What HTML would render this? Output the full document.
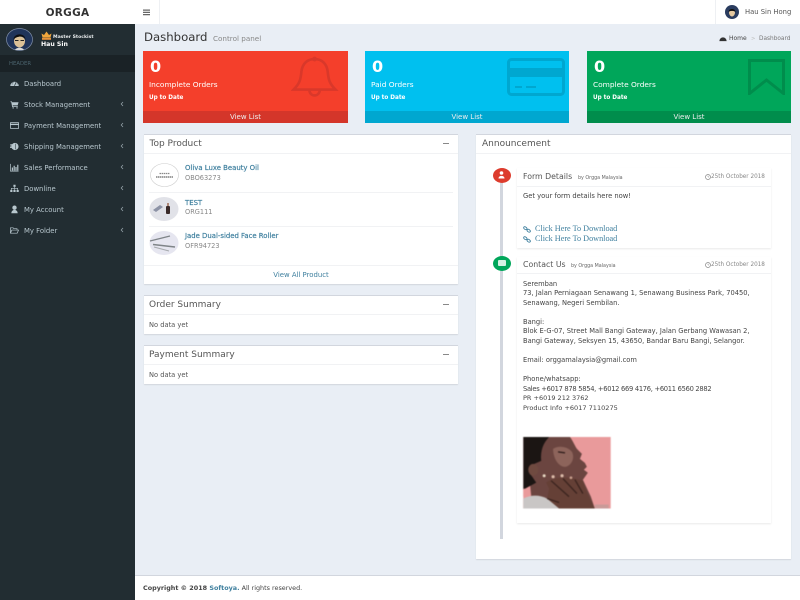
<!DOCTYPE html>
<html><head><meta charset="utf-8"><title>Dashboard</title>
<style>
*{box-sizing:border-box}
html,body{margin:0;padding:0;width:800px;height:600px;overflow:hidden;background:#e9eef5;font-family:"DejaVu Sans","Liberation Sans",sans-serif;color:#444}
#w{position:absolute;left:0;top:0;width:800px;height:600px;filter:blur(.35px);overflow:hidden}
.a{position:absolute}
.t{position:absolute;white-space:nowrap;line-height:10px;height:10px}
.box{position:absolute;background:#fff;border-top:1px solid #d2d6de;box-shadow:0 1px 1px rgba(0,0,0,.1)}
.hl{position:absolute;height:1px;background:#f1f2f4}
.m{position:absolute;left:24px;font-size:6.85px;color:#b8c7ce;white-space:nowrap;line-height:10px}
.i{position:absolute;left:10px;width:9px;height:9px}
.c{position:absolute;left:120px;width:4px;height:6px;opacity:.75}
.card{position:absolute;top:51px;height:72px;color:#fff}
.card .f{position:absolute;left:0;right:0;bottom:0;height:12px;text-align:center;font-size:7px;line-height:12px;color:#eee}
.card .n{position:absolute;left:7px;top:4px;font:bold 16px/24px "DejaVu Sans",sans-serif}
.card .l{position:absolute;left:6px;top:29px;font-size:7.4px;line-height:10px;white-space:nowrap}
.card .u{position:absolute;left:6px;top:41.500px;font-size:5.700px;line-height:10px;font-weight:bold;white-space:nowrap}
.h{font-size:9px;color:#555}
.body{font-size:6.7px;color:#444}
.pn{font-size:6.9px;color:#3e7f9e;-webkit-text-stroke:.18px #3e7f9e}
.min{position:absolute;width:6px;height:1px;background:#888}
</style></head><body><div id="w">

<!-- top bar -->
<div class="a" style="left:0;top:0;width:800px;height:24px;background:#fff"></div>
<div class="t" style="left:0;top:7.500px;width:135px;text-align:center;font:bold 10.500px/10px 'DejaVu Sans',sans-serif;color:#333;letter-spacing:.3px">ORGGA</div>
<svg class="a" style="left:143px;top:9px" width="8" height="7"><path d="M0 .5h7v1.200H0zM0 2.800h7V4H0zM0 5h7v1.200H0z" fill="#666"/></svg>
<div class="a" style="left:159px;top:0;width:1px;height:24px;background:#eef0f3"></div>
<div class="a" style="left:715px;top:0;width:1px;height:24px;background:#eef0f3"></div>
<svg class="a" style="left:725px;top:5px" width="14" height="14" viewBox="0 0 14 14"><circle cx="7" cy="7" r="7" fill="#2a3c5f"/><path d="M4 7.500c0-2.500 6-2.500 6 0 0 2-1.400 4-3 4s-3-2-3-4z" fill="#e5c9a0"/><path d="M3.500 7c0-4 7-4 7 0-1-1.500-6-1.500-7 0z" fill="#111"/></svg>
<div class="t" style="left:745px;top:7px;font-size:6.8px;color:#555">Hau Sin Hong</div>

<!-- sidebar -->
<div class="a" style="left:0;top:24px;width:135px;height:576px;background:#222d32"></div>
<div class="a" style="left:0;top:55px;width:135px;height:17px;background:#1a2226"></div>
<svg class="a" style="left:6px;top:28px" width="27" height="23" viewBox="0 0 27 23"><ellipse cx="13.500" cy="11.500" rx="13" ry="11" fill="#20345a" stroke="#7f8ea8" stroke-width=".7"/><path d="M8 13c0-6 11-6 11 0 0 4-3 6.500-5.500 6.500S8 17 8 13z" fill="#dcc197"/><path d="M7.500 12c-.5-7 12-8 12 0-1-3-3-3.500-5-3.500S8.500 9.500 7.500 12z" fill="#0e0e10"/><path d="M9 12.500h3.500M14.500 12.500H18" stroke="#222" stroke-width="1"/><path d="M9 22c1-3 8-3 9 0z" fill="#d9d9d9"/></svg>
<svg class="a" style="left:41px;top:31px" width="11" height="9" viewBox="0 0 11 9"><path d="M.5 2.500l2.500 1.500L5.500.5 8 4l2.500-1.500-1 4h-8z" fill="#f0a63c"/><rect x="1" y="6.800" width="9" height="2" fill="#e8933a"/></svg>
<div class="t" style="left:53px;top:33px;font-size:4.600px;font-weight:bold;color:#e6e9ea">Master Stockist</div>
<div class="t" style="left:41px;top:39.500px;font-size:6.200px;font-weight:bold;color:#fff">Hau Sin</div>
<div class="t" style="left:9px;top:59px;font-size:5.300px;color:#4b646f">HEADER</div>

<svg class="i" style="top:79px" viewBox="0 0 10 10"><path d="M.3 7.800a4.700 4.700 0 1 1 9.400 0z" fill="#b8c7ce"/><path d="M5 7.500L6.800 3.500M2 5.500h1M7.500 5.500h1M3 3.500l.6.600" stroke="#222d32" stroke-width=".8"/></svg>
<div class="m" style="top:78.500px">Dashboard</div>

<svg class="i" style="top:100px" viewBox="0 0 10 10"><path d="M.5 1.500h1.500l.5 1h7l-1 3.500H3l.2 1h5.500v.8H2.400L1.400 2.300H.5z" fill="#b8c7ce"/><circle cx="3.500" cy="8.800" r=".8" fill="#b8c7ce"/><circle cx="7.800" cy="8.800" r=".8" fill="#b8c7ce"/></svg>
<div class="m" style="top:99.500px">Stock Management</div>

<svg class="i" style="top:121px" viewBox="0 0 10 10"><rect x=".4" y="1.500" width="9.200" height="7" rx="1" fill="none" stroke="#b8c7ce" stroke-width=".9"/><rect x=".4" y="3" width="9.200" height="1.500" fill="#b8c7ce"/></svg>
<div class="m" style="top:120.500px">Payment Management</div>

<svg class="i" style="top:142px" viewBox="0 0 10 10"><circle cx="5.500" cy="5" r="4" fill="#b8c7ce"/><rect x=".3" y="2.500" width="4" height="1.500" fill="#b8c7ce"/><rect x="0" y="5" width="3.500" height="1.500" fill="#b8c7ce"/><path d="M6 2v6" stroke="#222d32" stroke-width=".6"/></svg>
<div class="m" style="top:141.500px">Shipping Management</div>

<svg class="i" style="top:163px" viewBox="0 0 10 10"><path d="M.5 1v8h9" fill="none" stroke="#b8c7ce" stroke-width=".8"/><path d="M2 5h1.300v3.500H2zM4 3h1.300v5.500H4zM6 4.500h1.300v4H6zM8 2h1.300v6.500H8z" fill="#b8c7ce"/></svg>
<div class="m" style="top:162.500px">Sales Performance</div>

<svg class="i" style="top:184px" viewBox="0 0 10 10"><path d="M3.800 .8h2.400v2.400H3.800zM.3 6.500h2.400v2.400H.3zM3.800 6.500h2.400v2.400H3.800zM7.300 6.500h2.400v2.400H7.300z" fill="#b8c7ce"/><path d="M1.500 6.500V4.800h7v1.700M5 3.200v3.300" fill="none" stroke="#b8c7ce" stroke-width=".7"/></svg>
<div class="m" style="top:183.500px">Downline</div>

<svg class="i" style="top:205px" viewBox="0 0 10 10"><circle cx="5" cy="3" r="2.400" fill="#b8c7ce"/><path d="M1.500 9.200c0-5 7-5 7 0z" fill="#b8c7ce"/></svg>
<div class="m" style="top:204.500px">My Account</div>

<svg class="i" style="top:226px" viewBox="0 0 10 10"><path d="M.5 8V2h3l.8 1h3.500v1.500M.5 8l1.500-3.500h7.500L8 8z" fill="none" stroke="#b8c7ce" stroke-width=".8"/></svg>
<div class="m" style="top:225.500px">My Folder</div>

<svg class="c" style="top:101px" viewBox="0 0 4 6"><path d="M3 1L1.200 3 3 5" fill="none" stroke="#b8c7ce" stroke-width=".8"/></svg>
<svg class="c" style="top:122px" viewBox="0 0 4 6"><path d="M3 1L1.200 3 3 5" fill="none" stroke="#b8c7ce" stroke-width=".8"/></svg>
<svg class="c" style="top:143px" viewBox="0 0 4 6"><path d="M3 1L1.200 3 3 5" fill="none" stroke="#b8c7ce" stroke-width=".8"/></svg>
<svg class="c" style="top:164px" viewBox="0 0 4 6"><path d="M3 1L1.200 3 3 5" fill="none" stroke="#b8c7ce" stroke-width=".8"/></svg>
<svg class="c" style="top:185px" viewBox="0 0 4 6"><path d="M3 1L1.200 3 3 5" fill="none" stroke="#b8c7ce" stroke-width=".8"/></svg>
<svg class="c" style="top:206px" viewBox="0 0 4 6"><path d="M3 1L1.200 3 3 5" fill="none" stroke="#b8c7ce" stroke-width=".8"/></svg>
<svg class="c" style="top:227px" viewBox="0 0 4 6"><path d="M3 1L1.200 3 3 5" fill="none" stroke="#b8c7ce" stroke-width=".8"/></svg>

<!-- page header -->
<div class="t" style="left:144px;top:29px;height:16px;line-height:16px;font-size:11.700px;color:#333">Dashboard</div>
<div class="t" style="left:213px;top:33.500px;font-size:7.200px;color:#888">Control panel</div>
<svg class="a" style="left:719px;top:35px" width="8" height="7" viewBox="0 0 10 9"><path d="M.3 7.800a4.700 4.700 0 1 1 9.400 0z" fill="#333"/></svg>
<div class="t" style="left:729px;top:34px;font-size:6px;color:#444">Home</div>
<div class="t" style="left:751px;top:34px;font-size:5.300px;color:#bbb">&gt;</div>
<div class="t" style="left:759px;top:34px;font-size:5.800px;color:#777">Dashboard</div>

<!-- cards -->
<div class="card" style="left:143px;width:205px;background:#f43f2b">
  <svg class="a" style="left:148px;top:3px" width="48" height="45" viewBox="0 0 55 46"><path d="M27 3c-9 0-14 6-15 14-1 10-2 14-9 21h48c-7-7-8-11-9-21-1-8-6-14-15-14z" fill="none" stroke="#d9382a" stroke-width="3"/><circle cx="27" cy="3" r="2.800" fill="#d9382a"/><path d="M21 38c0 9 12 9 12 0" fill="none" stroke="#d9382a" stroke-width="3"/></svg>
  <div class="n">0</div><div class="l">Incomplete Orders</div><div class="u">Up to Date</div>
  <div class="f" style="background:#d4362a">View List</div>
</div>
<div class="card" style="left:365px;width:204px;background:#00c0ef">
  <svg class="a" style="left:142px;top:7px" width="58" height="38" viewBox="0 0 58 38"><rect x="1.500" y="1.500" width="55" height="35" rx="3" fill="none" stroke="#00a7d0" stroke-width="3"/><rect x="1.500" y="10" width="55" height="9" fill="#00a7d0"/><path d="M8 29h7M19 29h10" stroke="#00a7d0" stroke-width="2"/></svg>
  <div class="n">0</div><div class="l">Paid Orders</div><div class="u">Up to Date</div>
  <div class="f" style="background:#00a7d0">View List</div>
</div>
<div class="card" style="left:587px;width:204px;background:#00a65a">
  <svg class="a" style="left:161px;top:8px" width="37" height="36" viewBox="0 0 37 36"><path d="M1.500 1.500h34v33L18.500 21 1.500 34.500z" fill="none" stroke="#008d4c" stroke-width="3"/></svg>
  <div class="n">0</div><div class="l">Complete Orders</div><div class="u">Up to Date</div>
  <div class="f" style="background:#008d4c">View List</div>
</div>

<!-- top product -->
<div class="box" style="left:144px;top:134px;width:314px;height:150px"></div>
<div class="t h" style="left:149.500px;top:138.500px">Top Product</div>
<div class="min" style="left:443px;top:143px"></div>
<div class="hl" style="left:144px;top:153px;width:314px"></div>

<svg class="a" style="left:150px;top:163px" width="29" height="24" viewBox="0 0 29 24"><ellipse cx="14.500" cy="12" rx="14" ry="11.500" fill="#fff" stroke="#ccc" stroke-width=".6"/><path d="M9.500 10.500h10" stroke="#888" stroke-width="1.200" stroke-dasharray="1.500 .6"/><path d="M6 14h17" stroke="#666" stroke-width="1.200" stroke-dasharray="1.500 .5"/></svg>
<div class="t pn" style="left:185px;top:163px">Oliva Luxe Beauty Oil</div>
<div class="t" style="left:185px;top:173px;font-size:6.600px;color:#888">OBO63273</div>
<div class="hl" style="left:149px;top:192px;width:304px"></div>

<svg class="a" style="left:149px;top:197px" width="30" height="24" viewBox="0 0 30 24"><ellipse cx="15" cy="12" rx="14.500" ry="12" fill="#e1e2e8"/><path d="M4 13l7-5 3 2-7 5z" fill="#8d93a6"/><rect x="17" y="9" width="4" height="8" rx="1" fill="#3a2a28"/><rect x="18" y="6" width="2" height="3" fill="#b08a7a"/></svg>
<div class="t pn" style="left:185px;top:197.500px">TEST</div>
<div class="t" style="left:185px;top:207px;font-size:6.600px;color:#888">ORG111</div>
<div class="hl" style="left:149px;top:226px;width:304px"></div>

<svg class="a" style="left:149px;top:231px" width="30" height="24" viewBox="0 0 30 24"><ellipse cx="15" cy="12" rx="14.500" ry="12" fill="#e6e6f0"/><path d="M1 10l20-5" stroke="#7f8488" stroke-width="1.400"/><path d="M4 13.500l22 2.500" stroke="#7f8488" stroke-width="1.400"/><path d="M5 16l15 4" stroke="#a6a9ad" stroke-width="1"/></svg>
<div class="t pn" style="left:185px;top:231px">Jade Dual-sided Face Roller</div>
<div class="t" style="left:185px;top:241px;font-size:6.600px;color:#888">OFR94723</div>
<div class="hl" style="left:144px;top:265px;width:314px"></div>
<div class="t" style="left:144px;top:270px;width:314px;text-align:center;font-size:6.900px;color:#3e7f9e">View All Product</div>

<!-- order -->
<div class="box" style="left:144px;top:295px;width:314px;height:39px"></div>
<div class="t h" style="left:149px;top:299.500px">Order Summary</div>
<div class="min" style="left:443px;top:304px"></div>
<div class="hl" style="left:144px;top:314px;width:314px"></div>
<div class="t" style="left:149px;top:320px;font-size:6.700px;color:#555">No data yet</div>

<!-- payment -->
<div class="box" style="left:144px;top:345px;width:314px;height:39px"></div>
<div class="t h" style="left:149px;top:349.500px">Payment Summary</div>
<div class="min" style="left:443px;top:354px"></div>
<div class="hl" style="left:144px;top:364px;width:314px"></div>
<div class="t" style="left:149px;top:370px;font-size:6.700px;color:#555">No data yet</div>

<!-- announcement -->
<div class="box" style="left:476px;top:134px;width:315px;height:425px"></div>
<div class="t h" style="left:482px;top:138.500px">Announcement</div>
<div class="hl" style="left:476px;top:153px;width:315px"></div>
<div class="a" style="left:500px;top:170px;width:3px;height:369px;background:#d2d6de"></div>

<div class="a" style="left:492.500px;top:168px;width:18px;height:15px;border-radius:50%;background:#dd3c2d"></div>
<svg class="a" style="left:498px;top:171px" width="7" height="8" viewBox="0 0 7 8"><circle cx="3.500" cy="2" r="1.800" fill="#fff"/><path d="M.5 7.500c0-3.500 6-3.500 6 0z" fill="#fff"/></svg>
<div class="a" style="left:492.500px;top:256px;width:18px;height:15px;border-radius:50%;background:#00a65a"></div>
<div class="a" style="left:497.500px;top:260px;width:8px;height:6px;background:#d4f2e3;border-radius:1px"></div>

<div class="a" style="left:517px;top:168px;width:254px;height:80px;background:#fff;box-shadow:0 1px 2px rgba(0,0,0,.09)"></div>
<div class="hl" style="left:517px;top:186px;width:254px"></div>
<div class="t" style="left:523px;top:172px;font-size:7.800px;color:#555">Form Details</div>
<div class="t" style="left:578px;top:173.500px;font-size:4.800px;color:#666">by Orgga Malaysia</div>
<svg class="a" style="left:705px;top:174px" width="6" height="6" viewBox="0 0 6 6"><circle cx="3" cy="3" r="2.500" fill="none" stroke="#888" stroke-width=".7"/><path d="M3 1.500V3h1.200" fill="none" stroke="#888" stroke-width=".5"/></svg>
<div class="t" style="left:711px;top:172px;font-size:5.700px;color:#888">25th October 2018</div>
<div class="t body" style="left:523px;top:191px;font-size:6.750px">Get your form details here now!</div>
<svg class="a" style="left:523px;top:226px" width="8" height="7" viewBox="0 0 8 7"><ellipse cx="2.300" cy="2.200" rx="1.800" ry="1.200" transform="rotate(35 2.300 2.200)" fill="none" stroke="#3e7f9e" stroke-width=".9"/><ellipse cx="5.700" cy="4.700" rx="1.800" ry="1.200" transform="rotate(35 5.700 4.700)" fill="none" stroke="#3e7f9e" stroke-width=".9"/></svg>
<div class="t" style="left:535px;top:224px;font:8.200px/10px 'Liberation Serif',serif;color:#3e7f9e">Click Here To Download</div>
<svg class="a" style="left:523px;top:236px" width="8" height="7" viewBox="0 0 8 7"><ellipse cx="2.300" cy="2.200" rx="1.800" ry="1.200" transform="rotate(35 2.300 2.200)" fill="none" stroke="#3e7f9e" stroke-width=".9"/><ellipse cx="5.700" cy="4.700" rx="1.800" ry="1.200" transform="rotate(35 5.700 4.700)" fill="none" stroke="#3e7f9e" stroke-width=".9"/></svg>
<div class="t" style="left:535px;top:234px;font:8.200px/10px 'Liberation Serif',serif;color:#3e7f9e">Click Here To Download</div>

<div class="a" style="left:517px;top:257px;width:254px;height:266px;background:#fff;box-shadow:0 1px 2px rgba(0,0,0,.09)"></div>
<div class="hl" style="left:517px;top:273px;width:254px"></div>
<div class="t" style="left:523px;top:260px;font-size:7.800px;color:#555">Contact Us</div>
<div class="t" style="left:571px;top:261.500px;font-size:4.800px;color:#666">by Orgga Malaysia</div>
<svg class="a" style="left:705px;top:262px" width="6" height="6" viewBox="0 0 6 6"><circle cx="3" cy="3" r="2.500" fill="none" stroke="#888" stroke-width=".7"/><path d="M3 1.500V3h1.200" fill="none" stroke="#888" stroke-width=".5"/></svg>
<div class="t" style="left:711px;top:260px;font-size:5.700px;color:#888">25th October 2018</div>

<div class="t body" style="left:523px;top:279px">Seremban</div>
<div class="t body" style="left:523px;top:288px">73, Jalan Perniagaan Senawang 1, Senawang Business Park, 70450,</div>
<div class="t body" style="left:523px;top:298px">Senawang, Negeri Sembilan.</div>
<div class="t body" style="left:523px;top:317px">Bangi:</div>
<div class="t body" style="left:523px;top:326px">Blok E-G-07, Street Mall Bangi Gateway, Jalan Gerbang Wawasan 2,</div>
<div class="t body" style="left:523px;top:336px">Bangi Gateway, Seksyen 15, 43650, Bandar Baru Bangi, Selangor.</div>
<div class="t body" style="left:523px;top:355px">Email: orggamalaysia@gmail.com</div>
<div class="t body" style="left:523px;top:374px">Phone/whatsapp:</div>
<div class="t body" style="left:523px;top:384px;letter-spacing:-.27px">Sales +6017 878 5854, +6012 669 4176, +6011 6560 2882</div>
<div class="t body" style="left:523px;top:393px;font-size:6.500px">PR +6019 212 3762</div>
<div class="t body" style="left:523px;top:403px;font-size:6.550px">Product Info +6017 7110275</div>

<svg class="a" style="left:523px;top:437px;filter:blur(.5px)" width="88" height="71.500" viewBox="0 0 88 72">
<rect width="88" height="72" fill="#e99a9b"/>
<path d="M14 0H47C50 4 52 9 54 12L59 17 57 22 62 26 64 30 61 33 65 36 60 43 68 60 72 72H30L8 60 6 40Z" fill="#6b4540"/>
<path d="M30 12c6-4 15-2 19 3 3 6 0 13-6 15-7 1-13-8-13-18z" fill="#8d645b"/>
<path d="M35 15l7 1" stroke="#2a1a18" stroke-width="1.200"/>
<path d="M0 0H26C20 6 17 14 18 24L11 27C6 29 5 35 9 40L13 46 0 53Z" fill="#1b1513"/>
<ellipse cx="10" cy="33" rx="5" ry="6" fill="#6f4a40"/>
<path d="M0 52L7 53 4 60H0Z" fill="#e99a9b"/>
<path d="M0 62C8 58 16 58 24 62L38 72H0Z" fill="#c9c6c5"/>
<path d="M23 46C28 41 42 40 52 42L60 44 64 56 72 72H36L24 62 26 52Z" fill="#654036"/>
<path d="M28 44l18 16M40 42l14 15M52 43l8 14M24 62l12 4" stroke="#3a231e" stroke-width="1.300" fill="none"/>
<circle cx="21" cy="39" r="1.500" fill="#e8d9c4"/><circle cx="30" cy="40" r="1.600" fill="#dcbcaa"/><circle cx="39" cy="39" r="1.600" fill="#dcbcaa"/><circle cx="48" cy="41" r="1.400" fill="#c9a08e"/>
<path d="M72 68h14v4H72z" fill="#c99a98"/>
</svg>

<!-- footer -->
<div class="a" style="left:135px;top:575px;width:665px;height:25px;background:#fff;border-top:1px solid #d2d6de"></div>
<div class="t" style="left:143px;top:583px;font-size:6.420px;color:#444"><b>Copyright © 2018 <span style="color:#3e7f9e">Softoya.</span></b> All rights reserved.</div>
</div></body></html>
